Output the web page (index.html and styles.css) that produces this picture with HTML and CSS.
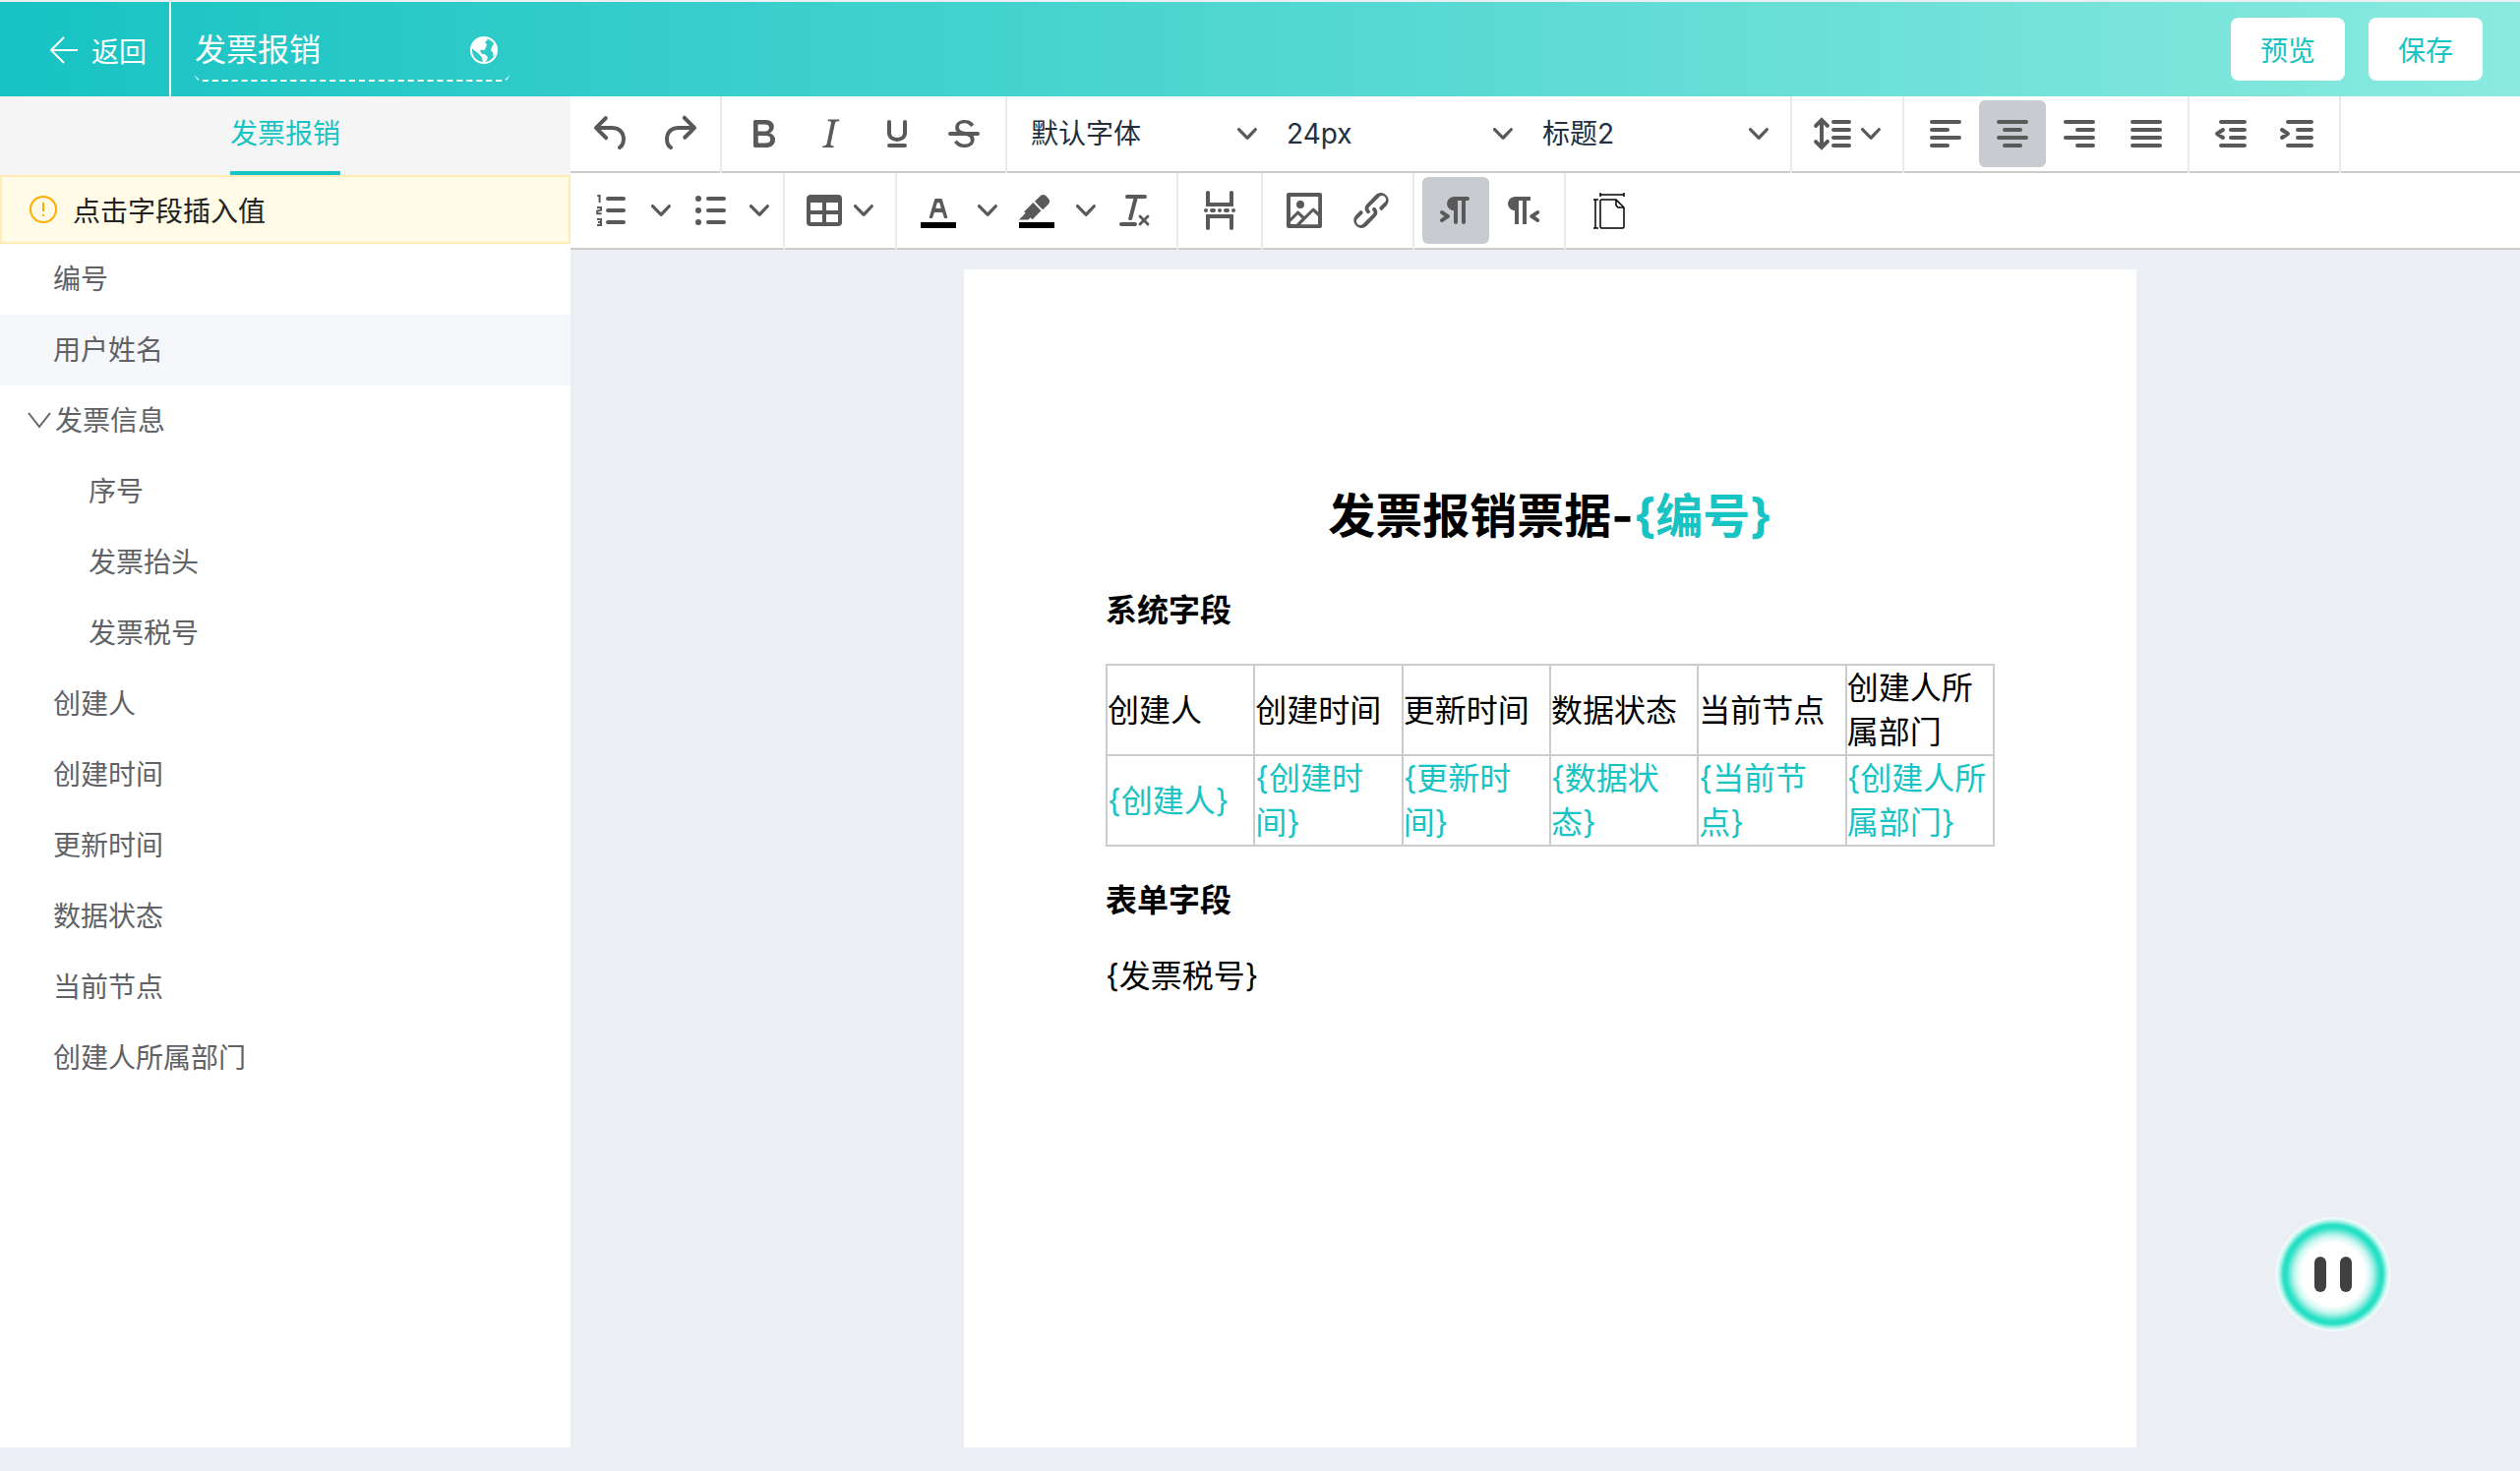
FILE: index.html
```html
<!DOCTYPE html>
<html lang="zh-CN">
<head>
    <meta charset="UTF-8">
    <meta name="viewport" content="width=device-width, initial-scale=1.0">
    <title>发票报销</title>
    <link rel="stylesheet" href="styles.css">
</head>
<body>
    <!-- 图标定义 -->
    <svg class="icon-defs" aria-hidden="true">
        <symbol id="chevron" viewBox="0 0 10 10"><path d="M8.7 2.2c.3-.3.8-.3 1 0 .4.4.4.9 0 1.2L5.7 7.8c-.3.3-.9.3-1.2 0L.2 3.4a.8.8 0 0 1 0-1.2c.3-.3.8-.3 1.1 0L5 6l3.7-3.8Z"/></symbol>
    </svg>

    <!-- 顶部栏 -->
    <header class="header">
        <a class="back" href="#">
            <svg class="back-icon" viewBox="0 0 28 28"><path d="M28 14H1M14 1 1 14l13 13"/></svg>
            <span>返回</span>
        </a>
        <div class="title-box">
            <input class="title-input" type="text" value="发票报销" aria-label="模板名称">
            <svg class="globe" viewBox="0 0 28 28">
                <circle cx="14" cy="14" r="13"/>
                <path d="M14 1.500C8 1.500 2.500 5 1.500 12l3 2.500 4 3 3.500 4 1 5.500 3.500-2 1.500-4-2.500-2.500-4-1-1.500-3 2-1 2.500.5 1.500-3 1-3-2-1.500 2.500-3-1-2.500z"/>
                <path d="M24.500 6.500 22 11l-1 3 2 2.500.5 4 2.500-2c1.500-4 .5-9-1.500-12z"/>
            </svg>
        </div>
        <div class="header-actions">
            <button type="button">预览</button>
            <button type="button">保存</button>
        </div>
    </header>

    <div class="container">
        <!-- 左侧字段列表 -->
        <aside class="sidebar">
            <div class="tabs">
                <a class="tab" href="#fields">发票报销</a>
            </div>
            <div class="tip">
                <svg class="tip-icon" viewBox="0 0 28 28"><circle cx="14" cy="14" r="13"/><path d="M14 7v9M14 19v2"/></svg>
                <span>点击字段插入值</span>
            </div>
            <ul class="field-list" id="fields">
                <li>编号</li>
                <li class="active">用户姓名</li>
                <li class="parent"><svg class="expand" viewBox="0 0 24 18"><path d="m1 1 11 14L23 1"/></svg>发票信息</li>
                <li class="child">序号</li>
                <li class="child">发票抬头</li>
                <li class="child">发票税号</li>
                <li>创建人</li>
                <li>创建时间</li>
                <li>更新时间</li>
                <li>数据状态</li>
                <li>当前节点</li>
                <li>创建人所属部门</li>
            </ul>
        </aside>

        <main class="editor">
            <!-- 工具栏第一行 -->
            <div class="toolbar">
                <div class="group">
                    <button type="button" class="tool" aria-label="撤销"><svg viewBox="0 0 24 24"><path d="M6.4 8H12c3.7 0 6.2 2 6.8 5.1.6 2.7-.4 5.6-2.3 6.8a1 1 0 0 1-1-1.8c1.1-.6 1.8-2.7 1.4-4.6-.5-2.1-2.1-3.5-4.9-3.5H6.4l3.3 3.3a1 1 0 1 1-1.4 1.4l-5-5a1 1 0 0 1 0-1.4l5-5a1 1 0 0 1 1.4 1.4L6.4 8Z"/></svg></button>
                    <button type="button" class="tool" aria-label="重做"><svg viewBox="0 0 24 24"><path d="M17.6 10H12c-2.8 0-4.4 1.4-4.9 3.5-.4 2 .3 4 1.4 4.6a1 1 0 1 1-1 1.8c-2-1.2-2.9-4.1-2.3-6.8.6-3 3-5.1 6.8-5.1h5.6l-3.3-3.3a1 1 0 1 1 1.4-1.4l5 5a1 1 0 0 1 0 1.4l-5 5a1 1 0 0 1-1.4-1.4l3.3-3.3Z"/></svg></button>
                </div>
                <div class="group">
                    <button type="button" class="tool" aria-label="粗体"><svg viewBox="0 0 24 24"><path fill-rule="evenodd" d="M7.8 19c-.3 0-.5 0-.6-.2l-.2-.5V5.7c0-.2 0-.4.2-.5l.6-.2h5c1.5 0 2.7.3 3.5 1 .7.6 1.1 1.4 1.1 2.5a3 3 0 0 1-.6 1.9c-.4.6-1 1-1.6 1.2.4.1.9.3 1.3.6s.8.7 1 1.2c.4.4.5 1 .5 1.6 0 1.3-.4 2.3-1.3 3-.8.7-2.1 1-3.8 1H7.8Zm5-8.3c.6 0 1.2-.1 1.6-.5.4-.3.6-.7.6-1.3 0-1.1-.8-1.7-2.3-1.7H9.3v3.5h3.4Zm.5 6c.7 0 1.3-.1 1.7-.4.4-.4.6-.9.6-1.5s-.2-1-.7-1.4c-.4-.3-1-.4-2-.4H9.4v3.8h4Z"/></svg></button>
                    <button type="button" class="tool" aria-label="斜体"><svg viewBox="0 0 24 24"><path d="m16.7 4.7-.1.9h-.3c-.6 0-1 0-1.4.3-.3.3-.4.6-.5 1.1l-2.1 9.8v.6c0 .5.4.8 1.4.8h.2l-.2.8H8l.2-.8h.2c1.1 0 1.8-.5 2-1.5l2-9.8.1-.5c0-.6-.4-.8-1.4-.8h-.3l.2-.9h5.8Z"/></svg></button>
                    <button type="button" class="tool" aria-label="下划线"><svg class="line" viewBox="0 0 24 24"><path d="M8 6v5.500c0 4.600 8 4.600 8 0V6M8 18h8"/></svg></button>
                    <button type="button" class="tool" aria-label="删除线"><svg viewBox="0 0 24 24"><path d="M15.6 8.5c-.5-.7-1-1.100-1.300-1.300-.6-.4-1.300-.6-2-.6-2.700 0-2.800 1.700-2.800 2.100 0 1.600 1.800 2 3.200 2.300 4.400.9 4.600 2.800 4.600 3.900 0 1.400-.7 4.100-5 4.100A6.200 6.200 0 0 1 7 16.400l1.500-1.100c.4.600 1.600 2 3.700 2 1.600 0 2.500-.4 3-1.200.4-.8.300-2-.8-2.600-.7-.4-1.600-.7-2.900-1-1-.2-3.900-.8-3.900-3.600C7.600 6 10.300 5 12.400 5c2.900 0 4.200 1.600 4.700 2.400l-1.500 1.100Z"/><path d="M5 11h14a1 1 0 0 1 0 2H5a1 1 0 0 1 0-2Z"/></svg></button>
                </div>
                <div class="group">
                    <div class="select-box">
                        <select aria-label="字体"><option>默认字体</option></select>
                        <svg class="chevron"><use href="#chevron"/></svg>
                    </div>
                    <div class="select-box">
                        <select aria-label="字号"><option>24px</option></select>
                        <svg class="chevron"><use href="#chevron"/></svg>
                    </div>
                    <div class="select-box">
                        <select aria-label="段落格式"><option>标题2</option></select>
                        <svg class="chevron"><use href="#chevron"/></svg>
                    </div>
                </div>
                <div class="group">
                    <button type="button" class="tool wide" aria-label="行高"><svg viewBox="0 0 24 24"><path d="M21 5a1 1 0 0 1 0 2h-8a1 1 0 0 1 0-2h8zm0 4a1 1 0 0 1 0 2h-8a1 1 0 0 1 0-2h8zm0 4a1 1 0 0 1 0 2h-8a1 1 0 0 1 0-2h8zm0 4a1 1 0 0 1 0 2h-8a1 1 0 0 1 0-2h8zM7 3.6l3.7 3.7a1 1 0 0 1-1.3 1.5h-.1L8 7.3v9.2l1.3-1.3a1 1 0 0 1 1.3 0h.1c.4.4.4 1 0 1.3v.1L7 20.4l-3.7-3.7a1 1 0 0 1 1.3-1.5h.1L6 16.7V7.4L4.7 8.7a1 1 0 0 1-1.3 0h-.1a1 1 0 0 1 0-1.3v-.1L7 3.6z"/></svg><svg class="chevron"><use href="#chevron"/></svg></button>
                </div>
                <div class="group">
                    <button type="button" class="tool" aria-label="左对齐"><svg class="line" viewBox="0 0 24 24"><path d="M5 6h14M5 10h8M5 14h14M5 18h8"/></svg></button>
                    <button type="button" class="tool on" aria-label="居中对齐"><svg class="line" viewBox="0 0 24 24"><path d="M5 6h14M8 10h8M5 14h14M8 18h8"/></svg></button>
                    <button type="button" class="tool" aria-label="右对齐"><svg class="line" viewBox="0 0 24 24"><path d="M5 6h14M11 10h8M5 14h14M11 18h8"/></svg></button>
                    <button type="button" class="tool" aria-label="两端对齐"><svg class="line" viewBox="0 0 24 24"><path d="M5 6h14M5 10h14M5 14h14M5 18h14"/></svg></button>
                </div>
                <div class="group">
                    <button type="button" class="tool" aria-label="减少缩进"><svg class="line" viewBox="0 0 24 24"><path d="M7 6h12M12 10h7M12 14h7M7 18h12M8 10l-3 2 3 2"/></svg></button>
                    <button type="button" class="tool" aria-label="增加缩进"><svg class="line" viewBox="0 0 24 24"><path d="M7 6h12M12 10h7M12 14h7M7 18h12M4 10l3 2-3 2"/></svg></button>
                </div>
            </div>

            <!-- 工具栏第二行 -->
            <div class="toolbar">
                <div class="group">
                    <button type="button" class="tool" aria-label="编号列表"><svg class="line" viewBox="0 0 24 24"><path d="M10 6h8M10 12h8M10 18h8"/><path class="thin" d="M4.600 4.500h1.200V8M4.500 10.500h2v1.400l-1.900.4v1.300h2.200M4.500 16.500h2v3h-2M5 18h1.500"/></svg></button>
                    <button type="button" class="tool arrow" aria-label="编号样式"><svg class="chevron"><use href="#chevron"/></svg></button>
                    <button type="button" class="tool" aria-label="项目列表"><svg class="line" viewBox="0 0 24 24"><path d="M11 6h8M11 12h8M11 18h8"/><path class="dot" d="M6 6h0M6 12h0M6 18h0"/></svg></button>
                    <button type="button" class="tool arrow" aria-label="项目样式"><svg class="chevron"><use href="#chevron"/></svg></button>
                </div>
                <div class="group">
                    <button type="button" class="tool wide" aria-label="表格"><svg viewBox="0 0 24 24"><path fill-rule="evenodd" d="M19 4a2 2 0 0 1 2 2v12a2 2 0 0 1-2 2H5a2 2 0 0 1-2-2V6c0-1.100.9-2 2-2h14ZM5 14v4h6v-4H5Zm14 0h-6v4h6v-4Zm0-6h-6v4h6V8ZM5 12h6V8H5v4Z"/></svg><svg class="chevron"><use href="#chevron"/></svg></button>
                </div>
                <div class="group">
                    <button type="button" class="tool" aria-label="文字颜色"><svg viewBox="0 0 24 24"><path class="swatch" d="M3 18h18v3H3z"/><path fill-rule="evenodd" d="M8.700 16h-.8a.5.500 0 0 1-.5-.6l2.700-9c.1-.3.300-.4.500-.4h2.800c.2 0 .4.100.5.400l2.700 9a.5.500 0 0 1-.5.600h-.8a.5.500 0 0 1-.4-.4l-.7-2.200c0-.3-.3-.4-.5-.4h-3.400c-.2 0-.4.100-.5.400l-.7 2.200c0 .3-.2.400-.4.400Zm2.600-7.600-.6 2a.5.500 0 0 0 .5.600h1.600a.5.500 0 0 0 .5-.6l-.6-2c0-.3-.3-.4-.5-.4h-.4c-.2 0-.4.100-.5.400Z"/></svg></button>
                    <button type="button" class="tool arrow" aria-label="选择文字颜色"><svg class="chevron"><use href="#chevron"/></svg></button>
                    <button type="button" class="tool" aria-label="背景颜色"><svg viewBox="0 0 24 24"><path class="swatch" d="M3 18h18v3H3z"/><path d="M7.700 16.700H3l3.300-3.300-.7-.8L10.200 8l4 4.100-4 4.200c-.2.200-.6.200-.8 0l-.6-.7-1.100 1.100zm5-7.500L11 7.400l3-2.900a2 2 0 0 1 2.600 0L18 6c.7.700.7 2 0 2.700l-2.900 2.900-2.400-2.400z"/></svg></button>
                    <button type="button" class="tool arrow" aria-label="选择背景颜色"><svg class="chevron"><use href="#chevron"/></svg></button>
                    <button type="button" class="tool" aria-label="清除格式"><svg viewBox="0 0 24 24"><path d="M13.200 6a1 1 0 0 1 0 .2l-2.600 10a1 1 0 0 1-1 .8h-.2a.8.800 0 0 1-.8-1l2.600-10H8a1 1 0 1 1 0-2h9a1 1 0 0 1 0 2h-3.800ZM5 18h7a1 1 0 0 1 0 2H5a1 1 0 0 1 0-2Zm13 1.500L16.500 18 15 19.500a.7.700 0 0 1-1-1l1.500-1.500-1.500-1.500a.7.700 0 0 1 1-1l1.500 1.500 1.500-1.500a.7.700 0 0 1 1 1L17.500 17l1.500 1.500a.7.700 0 0 1-1 1Z"/></svg></button>
                </div>
                <div class="group">
                    <button type="button" class="tool" aria-label="分页符"><svg viewBox="0 0 24 24"><path d="M5 11c.6 0 1 .4 1 1s-.4 1-1 1a1 1 0 0 1 0-2Zm3 0h1c.6 0 1 .4 1 1s-.4 1-1 1H8a1 1 0 0 1 0-2Zm4 0c.6 0 1 .4 1 1s-.4 1-1 1a1 1 0 0 1 0-2Zm3 0h1c.6 0 1 .4 1 1s-.4 1-1 1h-1a1 1 0 0 1 0-2Zm4 0c.6 0 1 .4 1 1s-.4 1-1 1a1 1 0 0 1 0-2ZM7 3v5h10V3c0-.6.4-1 1-1s1 .4 1 1v7H5V3c0-.6.4-1 1-1s1 .4 1 1ZM6 22a1 1 0 0 1-1-1v-7h14v7c0 .6-.4 1-1 1a1 1 0 0 1-1-1v-5H7v5c0 .6-.4 1-1 1Z"/></svg></button>
                </div>
                <div class="group">
                    <button type="button" class="tool" aria-label="图片"><svg viewBox="0 0 24 24"><path fill-rule="evenodd" d="m5 15.700 3.300-3.200c.3-.3.700-.3 1 0L12 15l4.100-4c.3-.4.800-.4 1 0l2 1.900V5H5v10.700ZM5 18V19h3l2.800-2.900-2-2L5 17.900Zm14-3-2.500-2.400-6.400 6.500H19v-4ZM4 3h16c.6 0 1 .4 1 1v16c0 .6-.4 1-1 1H4a1 1 0 0 1-1-1V4c0-.6.4-1 1-1Zm6 8a2 2 0 1 0 0-4 2 2 0 0 0 0 4Z"/></svg></button>
                    <button type="button" class="tool" aria-label="链接"><svg viewBox="0 0 24 24"><path d="M6.200 12.300a1 1 0 0 1 1.400 1.400l-2 2a2 2 0 1 0 2.600 2.800l4.800-4.800a1 1 0 0 0 0-1.400 1 1 0 1 1 1.400-1.300 2.900 2.900 0 0 1 0 4L9.600 20a3.900 3.900 0 0 1-5.500-5.500l2-2Zm11.600-.6a1 1 0 0 1-1.400-1.400l2-2a2 2 0 1 0-2.600-2.800L11 10.300a1 1 0 0 0 0 1.400A1 1 0 1 1 9.600 13a2.900 2.900 0 0 1 0-4L14.400 4a3.900 3.900 0 0 1 5.500 5.500l-2 2Z"/></svg></button>
                </div>
                <div class="group">
                    <button type="button" class="tool on" aria-label="从左到右"><svg viewBox="0 0 24 24"><path d="M11 5h7a1 1 0 0 1 0 2h-1v11a1 1 0 0 1-2 0V7h-2v11a1 1 0 0 1-2 0v-6c-.5 0-1 0-1.400-.3A3.400 3.400 0 0 1 7.800 10a3.300 3.300 0 0 1 0-2.800 3.400 3.400 0 0 1 1.800-1.800L11 5ZM4.400 16.200 6.200 15l-1.800-1.200a1 1 0 0 1 1.200-1.600l3 2a1 1 0 0 1 0 1.600l-3 2a1 1 0 1 1-1.200-1.600Z"/></svg></button>
                    <button type="button" class="tool" aria-label="从右到左"><svg viewBox="0 0 24 24"><path d="M8 5h8v2h-2v12h-2V7h-2v12H8v-7c-.5 0-1 0-1.400-.3A3.400 3.400 0 0 1 4.800 10a3.300 3.300 0 0 1 0-2.800 3.400 3.400 0 0 1 1.800-1.800L8 5Zm12.200 11.200a1 1 0 1 1-1.200 1.600l-3-2a1 1 0 0 1 0-1.600l3-2a1 1 0 1 1 1.200 1.600L18.400 15l1.800 1.200Z"/></svg></button>
                </div>
                <div class="group">
                    <button type="button" class="tool" aria-label="页面设置"><svg class="page-icon" viewBox="0 0 48 48"><path d="M17 8h24M17 6v4M41 6v4M12 13v29M10 13h5M10 42h5M18 13h15l8 8v20l-1 1H18l-1-1V14zM33 13v6l2 2h6"/></svg></button>
                </div>
            </div>

            <!-- 文档内容 -->
            <div class="canvas">
                <article class="page">
                    <h1>发票报销票据-<span class="field">{编号}</span></h1>
                    <h2>系统字段</h2>
                    <table>
                        <tr>
                            <td>创建人</td>
                            <td>创建时间</td>
                            <td>更新时间</td>
                            <td>数据状态</td>
                            <td>当前节点</td>
                            <td>创建人所属部门</td>
                        </tr>
                        <tr class="field">
                            <td>{创建人}</td>
                            <td>{创建时间}</td>
                            <td>{更新时间}</td>
                            <td>{数据状态}</td>
                            <td>{当前节点}</td>
                            <td>{创建人所属部门}</td>
                        </tr>
                    </table>
                    <h2>表单字段</h2>
                    <p>{发票税号}</p>
                </article>
            </div>
        </main>
    </div>

    <!-- 悬浮助手 -->
    <button type="button" class="assistant" aria-label="助手"><i></i><i></i></button>
</body>
</html>
```

FILE: styles.css
```css
/* 全局样式 */
* {
    margin: 0;
    padding: 0;
    box-sizing: border-box;
}

body {
    font-family: Inter, "Noto Sans CJK SC", sans-serif;
    font-size: 28px;
    background-color: #ebeef3;
    display: flex;
    flex-direction: column;
    height: 100vh;
    padding: 2px 0 24px;
}

button,
input,
select {
    font: inherit;
    border: none;
    background: none;
}

button {
    cursor: pointer;
}

a {
    text-decoration: none;
}

.icon-defs {
    position: absolute;
    width: 0;
    height: 0;
}

/* 顶部栏样式 */
.header {
    height: 96px;
    flex-shrink: 0;
    display: flex;
    align-items: center;
    padding-right: 38px;
    background: linear-gradient(90deg, #17c3c3, #8aeadf);
    color: white;
}

.back {
    width: 174px;
    height: 100%;
    display: flex;
    align-items: center;
    gap: 14px;
    padding-left: 51px;
    padding-top: 2px;
    border-right: 2px solid white;
    color: white;
}

.back-icon {
    width: 28px;
    height: 28px;
    fill: none;
    stroke: white;
    stroke-width: 2;
}

.title-box {
    display: flex;
    align-items: center;
    width: 320px;
    height: 66px;
    margin-left: 24px;
    padding-right: 12px;
    border-bottom: 2px dashed white;
    border-radius: 8px;
}

.title-input {
    flex: 1;
    min-width: 0;
    padding-bottom: 2px;
    color: white;
    font-size: 32px;
}

.globe {
    width: 28px;
    height: 28px;
    margin-top: 4px;
    fill: white;
}

.globe circle {
    fill: none;
    stroke: white;
    stroke-width: 2;
}

.header-actions {
    margin-left: auto;
    display: flex;
    gap: 24px;
}

.header-actions button {
    width: 116px;
    height: 64px;
    border-radius: 8px;
    background-color: white;
    color: #17c3c3;
}

.container {
    flex: 1;
    display: flex;
    min-height: 0;
}

/* 左侧字段列表样式 */
.sidebar {
    width: 580px;
    flex-shrink: 0;
    background-color: white;
}

.tabs {
    height: 80px;
    display: flex;
    justify-content: center;
    background-color: #f5f5f5;
}

.tab {
    line-height: 76px;
    border-bottom: 4px solid #17c3c3;
    color: #17c3c3;
}

.tip {
    height: 70px;
    display: flex;
    align-items: center;
    gap: 16px;
    padding: 0 28px;
    border: 2px solid #ffedb3;
    background-color: #fffbe6;
    color: #222;
}

.tip-icon {
    width: 28px;
    height: 28px;
    fill: none;
    stroke: #ffab00;
    stroke-width: 2;
}

.field-list {
    list-style-type: none;
    color: #606266;
}

.field-list li {
    height: 72px;
    line-height: 72px;
    padding-left: 54px;
}

.field-list .active {
    background-color: #f5f7fb;
}

.field-list .parent {
    display: flex;
    align-items: center;
    gap: 4px;
    padding-left: 28px;
}

.field-list .child {
    padding-left: 90px;
}

.expand {
    width: 24px;
    height: 18px;
    fill: none;
    stroke: #606266;
    stroke-width: 2;
}

/* 编辑器样式 */
.editor {
    flex: 1;
    display: flex;
    flex-direction: column;
    min-width: 0;
}

.toolbar {
    height: 78px;
    flex-shrink: 0;
    display: flex;
    background: linear-gradient(#ccc, #ccc) bottom / 100% 2px no-repeat white;
}

.group {
    display: flex;
    padding: 4px 8px 6px;
    border-right: 2px solid #eaeaea;
}

.toolbar .group:last-child:not(:nth-child(6)) {
    border-right: none;
}

.tool {
    width: 68px;
    height: 68px;
    display: flex;
    align-items: center;
    justify-content: center;
    border-radius: 6px;
    fill: #595959;
}

.tool svg {
    width: 48px;
    height: 48px;
}

.tool.on {
    background-color: #c8cbcf;
}

.tool.wide {
    width: 96px;
    gap: 6px;
    padding: 0 14px 0 8px;
}

.tool.arrow {
    width: 32px;
}

.tool .chevron,
.chevron {
    width: 20px;
    height: 20px;
    fill: #595959;
}

.line {
    fill: none;
    stroke: #595959;
    stroke-width: 2;
    stroke-linecap: round;
    stroke-linejoin: round;
}

.line .thin {
    stroke-width: 1;
    stroke-linecap: butt;
    stroke-linejoin: miter;
}

.line .dot {
    stroke-width: 3;
}

.swatch {
    fill: black;
}

.page-icon {
    fill: none;
    stroke: black;
    stroke-width: 1.5;
}

.select-box {
    position: relative;
    width: 260px;
    height: 68px;
}

.select-box select {
    width: 100%;
    height: 100%;
    padding-left: 16px;
    appearance: none;
    color: #222f3e;
}

.select-box .chevron {
    position: absolute;
    top: 24px;
    right: 14px;
    pointer-events: none;
}

/* 文档样式 */
.canvas {
    flex: 1;
    display: flex;
    justify-content: center;
    padding: 20px 0 0 10px;
}

.page {
    width: 1192px;
    padding: 217px 144px 144px;
    background-color: white;
    color: black;
    font-size: 32px;
    line-height: 45px;
}

.page h1 {
    font-size: 48px;
    line-height: 67px;
    margin-bottom: 40px;
    text-align: center;
}

.page h2 {
    font-size: 32px;
    margin: 32px 0;
}

.page .field {
    color: #17c3c3;
}

.page table {
    width: 100%;
    table-layout: fixed;
    border-collapse: collapse;
}

.page td {
    border: 2px solid #ccc;
    vertical-align: middle;
}

/* 悬浮助手样式 */
.assistant {
    position: fixed;
    right: 132px;
    bottom: 142px;
    width: 116px;
    height: 116px;
    display: flex;
    align-items: center;
    justify-content: center;
    gap: 14px;
    border-radius: 50%;
    background: radial-gradient(circle closest-side, white 56%, #c4f6ee 68%, #28e0c6 82%, #28e0c6 87%, #b5f3ea 94%, white 100%);
}

.assistant i {
    width: 12px;
    height: 36px;
    border-radius: 6px;
    background-color: #404040;
}
```
